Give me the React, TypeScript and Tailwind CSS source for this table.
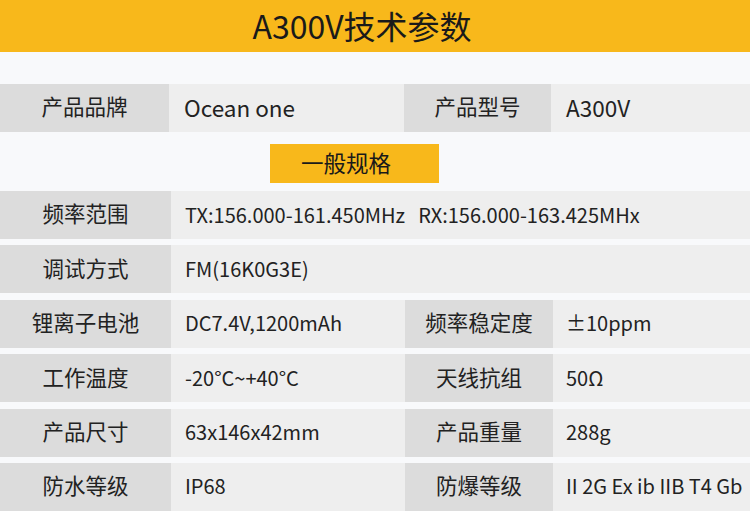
const rows: { label: string; value: React.ReactNode; label2?: string; value2?: string }[] = [
  {
    label: "频率范围",
    value: (
      <>
        TX:156.000-161.450MHz<span className="ml-[13px]">RX:156.000-163.425MHx</span>
      </>
    ),
  },
  { label: "调试方式", value: "FM(16K0G3E)" },
  { label: "锂离子电池", value: "DC7.4V,1200mAh", label2: "频率稳定度", value2: "±10ppm" },
  { label: "工作温度", value: "-20°C~+40°C", label2: "天线抗组", value2: "50Ω" },
  { label: "产品尺寸", value: "63x146x42mm", label2: "产品重量", value2: "288g" },
  { label: "防水等级", value: "IP68", label2: "防爆等级", value2: "II 2G Ex ib IIB T4 Gb" },
];

const Row = ({ label, value, label2, value2 }: (typeof rows)[number]) => (
  <div className="flex h-[48px] text-[#222]">
    <div className="w-[171px] shrink-0 bg-[#dcdcdc] flex items-center justify-center text-[21.5px] pb-[3px]">
      {label}
    </div>
    {label2 ? (
      <>
        <div className="w-[234px] shrink-0 bg-[#eeeeee] flex items-center pl-[14px] text-[20px] pb-[1px]">
          {value}
        </div>
        <div className="w-[148px] shrink-0 bg-[#dcdcdc] flex items-center justify-center text-[21.5px] pb-[3px]">
          {label2}
        </div>
        <div className="flex-1 bg-[#eeeeee] flex items-center pl-[13px] text-[20px] pb-[1px] whitespace-nowrap">
          {value2}
        </div>
      </>
    ) : (
      <div className="flex-1 bg-[#eeeeee] flex items-center pl-[14px] text-[20px] pb-[1px] whitespace-nowrap">
        {value}
      </div>
    )}
  </div>
);

export default function App() {
  return (
    <div
      className="w-[750px] h-[511px] overflow-hidden bg-[#f8f9fb]"
      style={{ fontFamily: '"Noto Sans CJK SC", "Noto Sans", sans-serif' }}
    >
      {/* HEADER */}
      <div className="h-[52px] bg-[#f8b81b] flex items-center justify-center text-[32px] text-[#1a1a1a] pb-[2px] pr-[26px]">
        A300V技术参数
      </div>

      <div className="pt-[32px]">
        <div className="flex h-[48px] text-[#222]">
          <div className="w-[169px] shrink-0 bg-[#dcdcdc] flex items-center justify-center text-[21.5px] pb-[3px]">
            产品品牌
          </div>
          <div className="w-[235px] shrink-0 bg-[#eeeeee] flex items-center pl-[15px] text-[22.5px] pb-[1px]">
            Ocean one
          </div>
          <div className="w-[147px] shrink-0 bg-[#dcdcdc] flex items-center justify-center text-[21.5px] pb-[3px]">
            产品型号
          </div>
          <div className="flex-1 bg-[#eeeeee] flex items-center pl-[15px] text-[22.5px] pb-[1px]">
            A300V
          </div>
        </div>

        {/* SECTION TITLE */}
        <div className="pt-[12px] pb-[8px] pl-[270px]">
          <div className="w-[169px] h-[39px] bg-[#f8b81b] flex items-center justify-center text-[22.5px] text-[#1a1a1a] pb-[2px] pr-[17px]">
            一般规格
          </div>
        </div>

        <div className="flex flex-col gap-[6.4px]">
          {rows.map((r) => (
            <Row key={r.label} {...r} />
          ))}
        </div>
      </div>
    </div>
  );
}
